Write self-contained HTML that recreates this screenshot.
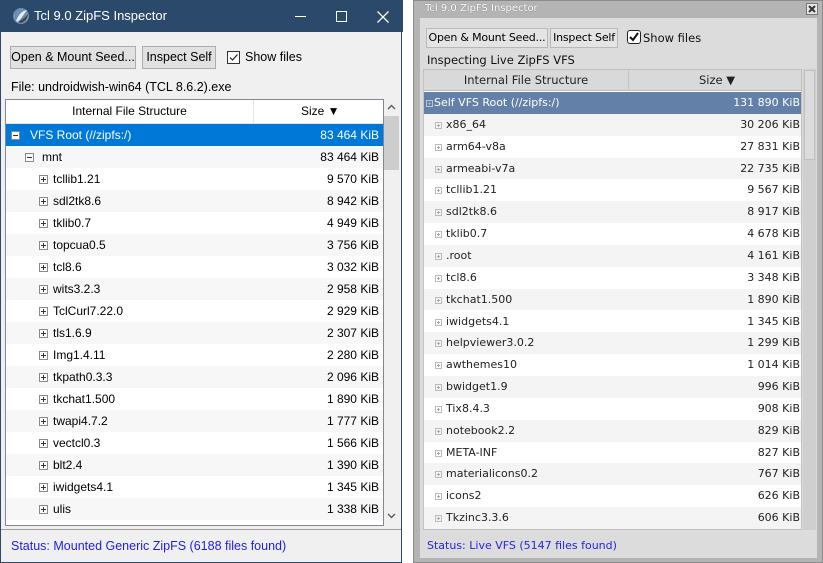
<!DOCTYPE html>
<html><head><meta charset="utf-8"><style>
*{margin:0;padding:0;box-sizing:border-box}
body{width:823px;height:563px;background:#fff;position:relative;overflow:hidden;font-family:"Liberation Sans",sans-serif}
.a{position:absolute}
#L{left:0;top:0;width:402px;height:563px;background:#f0f0f0;border:1px solid #2b4a6b;border-top:none}
#Lt{left:0;top:0;width:402px;height:32px;background:#2b4a6b;color:#fff;font-size:13px}
.lb{font-size:12.5px;color:#000}
.lbtn{background:#e1e1e1;border:1px solid #adadad;height:23px;top:46px;font-size:12.5px;line-height:21px;text-align:center;white-space:nowrap}
.lrow{position:absolute;left:0;width:377px;height:22px;font-size:12px;line-height:22px;color:#000}
.lrow .s{position:absolute;right:4px}
.pb{position:absolute;width:9px;height:9px;border:1px solid #8a8a8a;top:7px;background:#fff}
.pb:before{content:"";position:absolute;left:1px;top:3px;width:5px;height:1px;background:#333}
.pp:after{content:"";position:absolute;left:3px;top:1px;width:1px;height:5px;background:#333}
#R{left:413px;top:0;width:410px;height:563px;background:#b4b4b4;border:1px solid #8c8c8c}
#Rc{left:6px;top:17px;width:397px;height:540px;background:#dcdcdc}
.rbtn{background:#e4e4e4;border:1px solid #b8b8b8;height:20px;top:10px;font-family:"DejaVu Sans",sans-serif;font-size:11px;line-height:18px;text-align:center;white-space:nowrap;overflow:hidden;letter-spacing:-0.2px}
.rrow{position:absolute;left:0;width:378px;height:21.85px;font-family:"DejaVu Sans",sans-serif;font-size:11px;line-height:22px;color:#222}
.rrow .s{position:absolute;right:2px}
.rb{position:absolute;width:7px;height:7px;border:1px solid #bbb;top:8px}
.rb:before{content:"";position:absolute;left:1px;top:2px;width:3px;height:1px;background:#aaa}
.rb:after{content:"";position:absolute;left:2px;top:1px;width:1px;height:3px;background:#aaa}
</style></head><body>
<div id="L" class="a">
 <div id="Lt" class="a">
  <svg class="a" style="left:11px;top:7px" width="18" height="18"><circle cx="9" cy="9" r="8" fill="#6b8fb5"/><path d="M4 14 Q8 4 15 3 Q11 9 6 15Z" fill="#e8eef5"/><path d="M6 15 Q12 12 16 7 Q15 14 9 16Z" fill="#444"/></svg>
  <div class="a" style="left:33px;top:8px">Tcl 9.0 ZipFS Inspector</div>
  <div class="a" style="left:294px;top:16px;width:11px;height:1px;background:#fff"></div>
  <div class="a" style="left:335px;top:11px;width:11px;height:11px;border:1px solid #fff"></div>
  <svg class="a" style="left:376px;top:11px" width="12" height="12"><path d="M0.5 0.5L11.5 11.5M11.5 0.5L0.5 11.5" stroke="#fff" stroke-width="1.3"/></svg>
 </div>
 <div class="a lbtn" style="left:9px;width:126px">Open &amp; Mount Seed...</div>
 <div class="a lbtn" style="left:141px;width:74px">Inspect Self</div>
 <div class="a" style="left:226px;top:51px;width:13px;height:13px;border:1px solid #333;background:#fff"><svg width="11" height="11" style="position:absolute;left:0;top:0"><path d="M2 5.5L4.5 8L9.5 2.5" stroke="#222" fill="none" stroke-width="1.2"/></svg></div>
 <div class="a lb" style="left:244px;top:50px">Show files</div>
 <div class="a lb" style="left:10px;top:80px">File: undroidwish-win64 (TCL 8.6.2).exe</div>
 <div class="a" style="left:4px;top:99px;width:379px;height:427px;border:1px solid #828790;background:#fff;overflow:hidden">
  <div class="a" style="left:0;top:0;width:377px;height:24px;background:#fff;border-bottom:1px solid #e5e5e5;font-size:12px;line-height:23px">
   <div class="a" style="left:0;width:248px;text-align:center;border-right:1px solid #e5e5e5;height:23px">Internal File Structure</div>
   <div class="a" style="left:295px">Size ▼</div>
  </div>
  <div class="lrow" style="top:24px;background:#0078d7;color:#fff"><span class="pb" style="left:5px"></span><span style="position:absolute;left:24px">VFS Root (//zipfs:/)</span><span class="s">83 464 KiB</span></div>
  <div class="lrow" style="top:46px;background:#f7f7f7"><span class="pb" style="left:19px"></span><span style="position:absolute;left:36px">mnt</span><span class="s">83 464 KiB</span></div>
  <div id="lrows"></div>
 </div>
 <div class="a" style="left:383px;top:100px;width:15px;height:426px;background:#f0f0f0">
  <svg class="a" style="left:3px;top:4px" width="9" height="6"><path d="M1 5L4.5 1.5L8 5" stroke="#555" fill="none" stroke-width="1.3"/></svg>
  <div class="a" style="left:0;top:16px;width:15px;height:54px;background:#cdcdcd"></div>
  <svg class="a" style="left:3px;top:413px" width="9" height="6"><path d="M1 1L4.5 4.5L8 1" stroke="#555" fill="none" stroke-width="1.3"/></svg>
 </div>
 <div class="a" style="left:0;top:529px;width:400px;height:1px;background:#a0a0a0"></div>
 <div class="a" style="left:10px;top:539px;font-size:12.5px;color:#1e1ee6">Status: Mounted Generic ZipFS (6188 files found)</div>
</div>

<div id="R" class="a">
 <div class="a" style="left:11px;top:2px;color:#fff;font-family:'DejaVu Sans',sans-serif;font-size:10px;text-shadow:0 0 1px #666">Tcl 9.0 ZipFS Inspector</div>
 <div class="a" style="left:392px;top:2px;width:12px;height:12px;background:#e8e8e8;border:1px solid #777"><svg width="10" height="10" style="position:absolute;left:0;top:0"><path d="M2 2L8 8M8 2L2 8" stroke="#333" stroke-width="2"/></svg></div>
 <div id="Rc" class="a">
  <div class="a rbtn" style="left:6px;width:122px">Open &amp; Mount Seed...</div>
  <div class="a rbtn" style="left:130px;width:68px">Inspect Self</div>
  <div class="a" style="left:207px;top:12px;width:14px;height:14px;border:1px solid #222;border-radius:3px;background:#fff"><svg width="12" height="12" style="position:absolute;left:0;top:0"><path d="M2 6L5 9L10 2" stroke="#111" fill="none" stroke-width="2"/></svg></div>
  <div class="a" style="left:223px;top:13px;font-family:'DejaVu Sans',sans-serif;font-size:11.5px;color:#111">Show files</div>
  <div class="a" style="left:7px;top:35px;font-family:'DejaVu Sans',sans-serif;font-size:11.5px;color:#111">Inspecting Live ZipFS VFS</div>
  <div class="a" style="left:3px;top:51px;width:379px;height:461px;background:#fff;overflow:hidden;border:1px solid #c0c0c0">
   <div class="a" style="left:0;top:0;width:378px;height:21px;background:#d9d9d9;border-bottom:1px solid #bbb;font-family:'DejaVu Sans',sans-serif;font-size:11.5px;line-height:20px;color:#222">
    <div class="a" style="left:0;width:205px;text-align:center;border-right:1px solid #c4c4c4;height:21px">Internal File Structure</div>
    <div class="a" style="left:275px">Size ▼</div>
   </div>
   <div class="rrow" style="top:22px;background:#6380a8;color:#fff"><span class="rb" style="left:2px;border-color:#b8c6da"></span><span style="position:absolute;left:10px">Self VFS Root (//zipfs:/)</span><span class="s">131 890 KiB</span></div>
   <div id="rrows"></div>
  </div>
  <div class="a" style="left:383px;top:51px;width:13px;height:461px;background:#cfcfcf"><div class="a" style="left:1px;top:1px;width:11px;height:90px;background:#dcdcdc;border:1px solid #c0c0c0"></div></div>
  <div class="a" style="left:7px;top:521px;font-family:'DejaVu Sans',sans-serif;font-size:11px;color:#2424e0">Status: Live VFS (5147 files found)</div>
 </div>
</div>
<script>
var L=[["tcllib1.21","9 570"],["sdl2tk8.6","8 942"],["tklib0.7","4 949"],["topcua0.5","3 756"],["tcl8.6","3 032"],["wits3.2.3","2 958"],["TclCurl7.22.0","2 929"],["tls1.6.9","2 307"],["Img1.4.11","2 280"],["tkpath0.3.3","2 096"],["tkchat1.500","1 890"],["twapi4.7.2","1 777"],["vectcl0.3","1 566"],["blt2.4","1 390"],["iwidgets4.1","1 345"],["ulis","1 338"],["xotcl","1 300"]];
var h="";L.forEach(function(r,i){h+='<div class="lrow" style="top:'+(68+22*i)+'px;background:'+(i%2?'#f7f7f7':'#fff')+'"><span class="pb pp" style="left:33px"></span><span style="position:absolute;left:47px">'+r[0]+'</span><span class="s">'+r[1]+' KiB</span></div>'});
document.getElementById("lrows").innerHTML=h;
var R=[["x86_64","30 206"],["arm64-v8a","27 831"],["armeabi-v7a","22 735"],["tcllib1.21","9 567"],["sdl2tk8.6","8 917"],["tklib0.7","4 678"],[".root","4 161"],["tcl8.6","3 348"],["tkchat1.500","1 890"],["iwidgets4.1","1 345"],["helpviewer3.0.2","1 299"],["awthemes10","1 014"],["bwidget1.9","996"],["Tix8.4.3","908"],["notebook2.2","829"],["META-INF","827"],["materialicons0.2","767"],["icons2","626"],["Tkzinc3.3.6","606"],["more","500"]];
h="";R.forEach(function(r,i){h+='<div class="rrow" style="top:'+(22+21.85*(i+1))+'px;background:'+(i%2?'#fff':'#f4f4f4')+'"><span class="rb" style="left:11px"></span><span style="position:absolute;left:22px">'+r[0]+'</span><span class="s">'+r[1]+' KiB</span></div>'});
document.getElementById("rrows").innerHTML=h;
</script>
</body></html>
